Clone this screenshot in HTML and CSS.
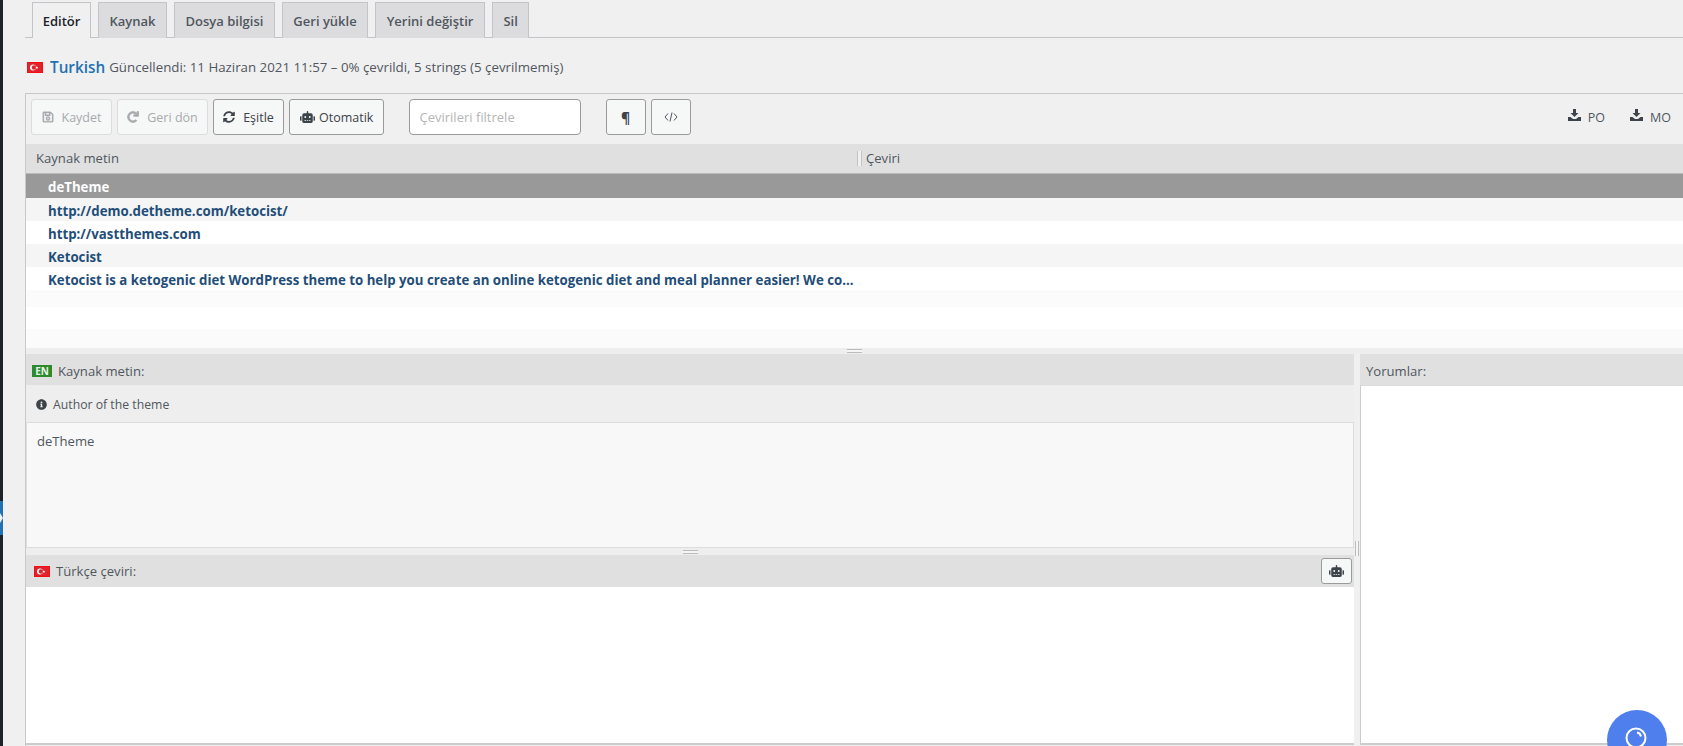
FILE: index.html
```html
<!DOCTYPE html>
<html lang="tr">
<head>
    <meta charset="UTF-8">
    <meta name="viewport" content="width=device-width, initial-scale=1.0">
    <title>Turkish - Loco Translate</title>
    <link rel="stylesheet" href="styles.css">
</head>
<body>
    <svg class="icon-defs" aria-hidden="true">
        <symbol id="i-save" viewBox="0 0 448 512"><path d="M433.941 129.941l-83.882-83.882A48 48 0 0 0 316.118 32H48C21.49 32 0 53.49 0 80v352c0 26.51 21.49 48 48 48h352c26.51 0 48-21.49 48-48V163.882a48 48 0 0 0-14.059-33.941zM272 80v80H144V80h128zm122 352H54a6 6 0 0 1-6-6V86a6 6 0 0 1 6-6h42v104c0 13.255 10.745 24 24 24h176c13.255 0 24-10.745 24-24V83.882l78.243 78.243a6 6 0 0 1 1.757 4.243V426a6 6 0 0 1-6 6zM224 232c-48.523 0-88 39.477-88 88s39.477 88 88 88 88-39.477 88-88-39.477-88-88-88zm0 128c-22.056 0-40-17.944-40-40s17.944-40 40-40 40 17.944 40 40-17.944 40-40 40z"/></symbol>
        <symbol id="i-redo" viewBox="-20 -20 552 552"><path d="M500.33 0h-47.41a12 12 0 0 0-12 12.57l4 82.76A247.42 247.42 0 0 0 256 8C119.34 8 7.9 119.53 8 256.19 8.1 393.07 119.1 504 256 504a247.1 247.1 0 0 0 166.18-63.91 12 12 0 0 0 .48-17.43l-34-34a12 12 0 0 0-16.38-.55A176 176 0 1 1 402.1 157.8l-101.53-4.87a12 12 0 0 0-12.57 12v47.41a12 12 0 0 0 12 12h200.33a12 12 0 0 0 12-12V12a12 12 0 0 0-12-12z" stroke="currentColor" stroke-width="36"/></symbol>
        <symbol id="i-sync" viewBox="0 0 512 512"><path d="M370.72 133.28C339.458 104.008 298.888 87.962 255.848 88c-77.458.068-144.328 53.178-162.791 126.85-1.344 5.363-6.122 9.15-11.651 9.15H24.103c-7.498 0-13.194-6.807-11.807-14.176C33.933 94.924 134.813 8 256 8c66.448 0 126.791 26.136 171.315 68.685L463.03 40.97C478.149 25.851 504 36.559 504 57.941V192c0 13.255-10.745 24-24 24H345.941c-21.382 0-32.09-25.851-16.971-40.971l41.75-41.749zM32 296h134.059c21.382 0 32.09 25.851 16.971 40.971l-41.75 41.75c31.262 29.273 71.835 45.319 114.876 45.28 77.418-.07 144.315-53.144 162.787-126.849 1.344-5.363 6.122-9.15 11.651-9.15h57.304c7.498 0 13.194 6.807 11.807 14.176C478.067 417.076 377.187 504 256 504c-66.448 0-126.791-26.136-171.315-68.685L48.97 471.03C33.851 486.149 8 475.441 8 454.059V320c0-13.255 10.745-24 24-24z"/></symbol>
        <symbol id="i-robot" viewBox="0 0 640 512"><path d="M32,224H64V416H32A31.96166,31.96166,0,0,1,0,384V256A31.96166,31.96166,0,0,1,32,224Zm512-48V448a64.06328,64.06328,0,0,1-64,64H160a64.06328,64.06328,0,0,1-64-64V176a79.974,79.974,0,0,1,80-80H288V32a32,32,0,0,1,64,0V96H464A79.974,79.974,0,0,1,544,176ZM264,256a40,40,0,1,0-40,40A39.997,39.997,0,0,0,264,256Zm-8,128H192v32h64Zm96,0H288v32h64ZM456,256a40,40,0,1,0-40,40A39.997,39.997,0,0,0,456,256Zm-8,128H384v32h64ZM640,256V384a31.96166,31.96166,0,0,1-32,32H576V224h32A31.96166,31.96166,0,0,1,640,256Z"/></symbol>
        <symbol id="i-info" viewBox="0 0 512 512"><path d="M256 8C119.043 8 8 119.083 8 256c0 136.997 111.043 248 248 248s248-111.003 248-248C504 119.083 392.957 8 256 8zm0 110c23.196 0 42 18.804 42 42s-18.804 42-42 42-42-18.804-42-42 18.804-42 42-42zm56 254c0 6.627-5.373 12-12 12h-88c-6.627 0-12-5.373-12-12v-24c0-6.627 5.373-12 12-12h12v-64h-12c-6.627 0-12-5.373-12-12v-24c0-6.627 5.373-12 12-12h64c6.627 0 12 5.373 12 12v100h12c6.627 0 12 5.373 12 12v24z"/></symbol>
        <symbol id="i-download" viewBox="0 0 13 12"><path d="M5 0h3v4h2.500L6.500 8 2.500 4H5zM0 8h2.500l2.500 2h3l2.500-2H13v4H0zM10 9.500h1.500v1H10z"/></symbol>
        <symbol id="i-flag" viewBox="0 0 16 11"><rect width="16" height="11" fill="#f50f0f"/><rect x="1" y="1" width="14" height="9" fill="#e0222c"/><circle cx="6" cy="5.500" r="3" fill="#fff"/><circle cx="7" cy="5.500" r="2.200" fill="#e0222c"/><path d="M9.800 3.900l.4 1.200h1.200l-1 .7.400 1.200-1-.7-1 .7.400-1.200-1-.7h1.200z" fill="#fff"/></symbol>
    </svg>

    <div class="page">
        <div class="admin-edge"><div class="admin-edge-current"></div></div>

        <div class="main">
            <nav class="tabs">
                <a class="tab tab-active">Editör</a>
                <a class="tab">Kaynak</a>
                <a class="tab">Dosya bilgisi</a>
                <a class="tab">Geri yükle</a>
                <a class="tab">Yerini değiştir</a>
                <a class="tab">Sil</a>
            </nav>

            <div class="file-title">
                <svg class="flag"><use href="#i-flag"/></svg>
                <a class="file-lang">Turkish</a>
                <span class="file-meta">Güncellendi: 11 Haziran 2021 11:57 – 0% çevrildi, 5 strings (5 çevrilmemiş)</span>
            </div>

            <div class="editor">
                <div class="toolbar">
                    <button class="btn btn-save" disabled><svg class="icon icon-save"><use href="#i-save"/></svg>Kaydet</button>
                    <button class="btn btn-revert" disabled><svg class="icon"><use href="#i-redo"/></svg>Geri dön</button>
                    <button class="btn btn-sync"><svg class="icon"><use href="#i-sync"/></svg>Eşitle</button>
                    <button class="btn btn-auto"><svg class="icon icon-robot"><use href="#i-robot"/></svg>Otomatik</button>
                    <input class="filter-input" type="text" placeholder="Çevirileri filtrele">
                    <button class="btn btn-square btn-para">¶</button>
                    <button class="btn btn-square">
                        <svg class="icon-code" viewBox="0 0 14 10"><path d="M4 1.500L1 5l3 3.500M10 1.500L13 5l-3 3.500M8 .500L6 9.500"/></svg>
                    </button>
                    <div class="downloads">
                        <a class="download"><svg class="icon-download"><use href="#i-download"/></svg>PO</a>
                        <a class="download"><svg class="icon-download"><use href="#i-download"/></svg>MO</a>
                    </div>
                </div>

                <div class="grid-head">
                    <div class="grid-col-source">Kaynak metin</div>
                    <div class="grid-col-target">Çeviri</div>
                </div>
                <div class="grid-rows">
                    <div class="row row-selected">deTheme</div>
                    <div class="row row-odd">http://demo.detheme.com/ketocist/</div>
                    <div class="row">http://vastthemes.com</div>
                    <div class="row row-odd">Ketocist</div>
                    <div class="row">Ketocist is a ketogenic diet WordPress theme to help you create an online ketogenic diet and meal planner easier! We co...</div>
                    <div class="row-empty row-empty-a"></div>
                    <div class="row-empty row-empty-b"></div>
                    <div class="row-empty row-empty-c"></div>
                </div>

                <div class="split-handle"><span class="grip"></span></div>

                <div class="panes">
                    <div class="pane-left">
                        <div class="pane-head">
                            <span class="lang-badge">EN</span>
                            <span>Kaynak metin:</span>
                        </div>
                        <div class="pane-note">
                            <svg class="icon-info"><use href="#i-info"/></svg>
                            <span>Author of the theme</span>
                        </div>
                        <div class="source-text">deTheme</div>
                        <div class="split-handle split-handle-inner"><span class="grip"></span></div>
                        <div class="pane-head pane-head-target">
                            <svg class="flag"><use href="#i-flag"/></svg>
                            <span>Türkçe çeviri:</span>
                            <button class="btn btn-robot"><svg class="icon-robot-small"><use href="#i-robot"/></svg></button>
                        </div>
                        <div class="target-text"></div>
                    </div>

                    <div class="pane-divider"><span class="grip-v"></span></div>

                    <div class="pane-right">
                        <div class="pane-head">Yorumlar:</div>
                        <div class="comments"></div>
                    </div>
                </div>
            </div>
        </div>
    </div>

    <div class="help-bubble">
        <svg class="help-ring" viewBox="0 0 24 24"><circle cx="12" cy="12" r="9.500"/><path d="M13 6.500a5 5 0 0 1 4 4"/></svg>
    </div>
</body>
</html>
```

FILE: styles.css
```css
* {
    box-sizing: border-box;
}

html,
body {
    margin: 0;
    height: 100%;
    overflow: hidden;
}

body {
    background-color: #f0f0f1;
    color: #50575e;
    font-family: "Open Sans", "Noto Sans", sans-serif;
    font-size: 13.1px;
}

.icon-defs {
    display: none;
}

.page {
    display: flex;
    height: 746px;
}

/* sliver of the wp admin menu */
.admin-edge {
    width: 3px;
    flex-shrink: 0;
    background-color: #1d2327;
    padding-top: 501px;
}

.admin-edge-current {
    position: relative;
    height: 34px;
    background-color: #2271b1;
}

.admin-edge-current::after {
    content: "";
    position: absolute;
    top: 12px;
    left: 0;
    border: 5px solid transparent;
    border-left-color: #f0f0f1;
    border-left-width: 3px;
    border-right-width: 0;
}

.main {
    flex: 1;
    min-width: 0;
    padding-left: 22px;
}

/* tabs */
.tabs {
    display: flex;
    gap: 7px;
    height: 38px;
    padding: 2px 0 0 7px;
    border-bottom: 1px solid #c3c4c7;
}

.tab {
    display: flex;
    align-items: center;
    justify-content: center;
    height: 36px;
    padding: 0 10.5px;
    border: 1px solid #c3c4c7;
    border-bottom: none;
    background-color: #dcdcde;
    color: #50575e;
    font-size: 13px;
    font-weight: 600;
}

.tab-active {
    width: 59px;
    padding: 0;
    background-color: #f0f0f1;
    color: #1d2327;
}

/* file title */
.file-title {
    display: flex;
    align-items: center;
    height: 55px;
    padding: 3px 0 0 2px;
}

.flag {
    width: 16px;
    height: 11px;
    flex-shrink: 0;
}

.file-lang {
    margin-left: 7px;
    color: #2271b1;
    font-size: 15.3px;
    font-weight: 600;
}

.file-meta {
    margin-left: 4px;
    font-size: 13.3px;
}

.editor {
    border-top: 1px solid #c9c9c9;
    border-left: 1px solid #c9c9c9;
}

/* toolbar */
.toolbar {
    display: flex;
    align-items: center;
    height: 50px;
    padding: 0 0 4px 5px;
    gap: 5px;
}

.btn {
    display: inline-flex;
    align-items: center;
    justify-content: center;
    height: 36px;
    padding: 0;
    border: 1px solid #9a9a9a;
    border-radius: 3px;
    background-color: #f6f7f7;
    color: #3c434a;
    font-family: inherit;
    font-size: 12.5px;
}

.btn:disabled {
    border-color: #dcdcde;
    color: #a7aaad;
}

.btn-save {
    width: 81px;
}

.btn-revert {
    width: 91px;
}

.btn-sync {
    width: 71px;
}

.btn-auto {
    width: 94.5px;
}

.btn-square {
    width: 40px;
}

.btn-para {
    font-size: 14px;
    font-weight: 700;
}

.icon {
    width: 12px;
    height: 12px;
    margin-right: 8px;
    fill: currentColor;
}

.icon-save {
    stroke: currentColor;
    stroke-width: 16;
}

.icon-robot {
    width: 17px;
    margin-right: 3px;
}

.icon-code {
    width: 14px;
    height: 10px;
    fill: none;
    stroke: #50575e;
    stroke-width: 1;
}

.filter-input {
    width: 172px;
    height: 36px;
    margin: 0 20px;
    padding: 0 10px;
    border: 1px solid #9a9a9a;
    border-radius: 4px;
    background-color: #fff;
    font-family: inherit;
    font-size: 13px;
    outline: none;
}

.filter-input::placeholder {
    color: #b5b5b5;
    opacity: 1;
}

.downloads {
    display: flex;
    gap: 25px;
    margin-left: auto;
    padding-right: 12px;
}

.download {
    display: flex;
    align-items: center;
    gap: 7px;
    color: #50575e;
    font-size: 12.5px;
}

.icon-download {
    width: 13px;
    height: 12px;
    margin-top: -4px;
    fill: #3c434a;
}

/* string list */
.grid-head {
    display: flex;
    height: 30px;
    background-color: #e0e0e0;
    border-bottom: 1px solid #bbb;
    line-height: 28px;
}

.grid-col-source {
    width: 831px;
    padding-left: 10px;
}

.grid-col-target {
    position: relative;
    padding-left: 9px;
}

.grid-col-target::before {
    content: "";
    position: absolute;
    top: 7px;
    left: 0;
    width: 3px;
    height: 15px;
    border-left: 1px solid #c4c4c4;
    border-right: 1px solid #c4c4c4;
    background-color: #f0f0f0;
}

.row {
    height: 23px;
    padding: 2px 0 0 22px;
    background-color: #fff;
    color: #1f4e79;
    font-size: 13.25px;
    font-weight: 700;
    line-height: 22px;
    white-space: nowrap;
}

.row-odd {
    background-color: #f5f5f5;
}

.row-selected {
    height: 24px;
    background-color: #999;
    color: #fff;
}

.row-empty-a {
    height: 17px;
    background-color: #fbfbfb;
}

.row-empty-b {
    height: 22px;
    background-color: #fff;
}

.row-empty-c {
    height: 19px;
    background-color: #fbfbfb;
}

.split-handle {
    display: flex;
    align-items: center;
    justify-content: center;
    height: 6px;
    background-color: #eee;
}

.grip {
    width: 15px;
    height: 4px;
    border-top: 1px solid #bbb;
    border-bottom: 1px solid #bbb;
    background-color: #f5f5f5;
}

/* panes */
.panes {
    display: flex;
    height: 392px;
}

.pane-left {
    display: flex;
    flex-direction: column;
    width: 1328px;
    flex-shrink: 0;
}

.pane-divider {
    position: relative;
    width: 6px;
    flex-shrink: 0;
}

.grip-v {
    position: absolute;
    top: 187px;
    left: 1px;
    width: 4px;
    height: 15px;
    border-left: 1px solid #bbb;
    border-right: 1px solid #bbb;
    background-color: #f5f5f5;
}

.pane-right {
    display: flex;
    flex-direction: column;
    flex: 1;
    min-width: 0;
}

.pane-head {
    display: flex;
    align-items: center;
    flex-shrink: 0;
    height: 31px;
    padding: 2px 0 0 6px;
    background-color: #e0e0e0;
}

.pane-head-target {
    height: 32px;
    padding: 0 0 0 8px;
}

.pane-head-target span {
    margin-left: 6px;
}

.lang-badge {
    width: 20px;
    height: 12px;
    margin-right: 6px;
    background-color: #2d8a2d;
    color: #e8f3e8;
    font-size: 10px;
    font-weight: 700;
    line-height: 12px;
    text-align: center;
}

.pane-note {
    display: flex;
    align-items: center;
    gap: 6px;
    height: 37px;
    padding: 2px 0 0 10px;
    background-color: #eee;
    font-size: 12.25px;
}

.icon-info {
    width: 11px;
    height: 11px;
    fill: #3c434a;
}

.source-text {
    height: 126px;
    padding: 8px 10px;
    border: 1px solid #ddd;
    background-color: #f8f8f8;
    line-height: 20px;
}

.split-handle-inner {
    height: 7px;
}

.btn-robot {
    width: 31px;
    height: 26px;
    margin-left: auto;
    margin-right: 2px;
}

.icon-robot-small {
    width: 15px;
    height: 12px;
    fill: #3c434a;
}

.target-text {
    flex: 1;
    background-color: #fff;
    border-bottom: 2px solid #ccc;
    margin-bottom: 1px;
}

.comments {
    flex: 1;
    background-color: #fff;
    border-left: 1px solid #ccc;
    border-top: 1px solid #ddd;
    border-bottom: 2px solid #ccc;
    margin-bottom: 1px;
}

/* help bubble sits over the page */
.help-bubble {
    position: absolute;
    top: 710px;
    left: 1607px;
    width: 60px;
    height: 60px;
    border-radius: 50%;
    background-color: #4f7fec;
    padding: 16px 0 0 17px;
}

.help-ring {
    display: block;
    width: 24px;
    height: 24px;
    fill: none;
    stroke: #fff;
    stroke-width: 2;
}
```
